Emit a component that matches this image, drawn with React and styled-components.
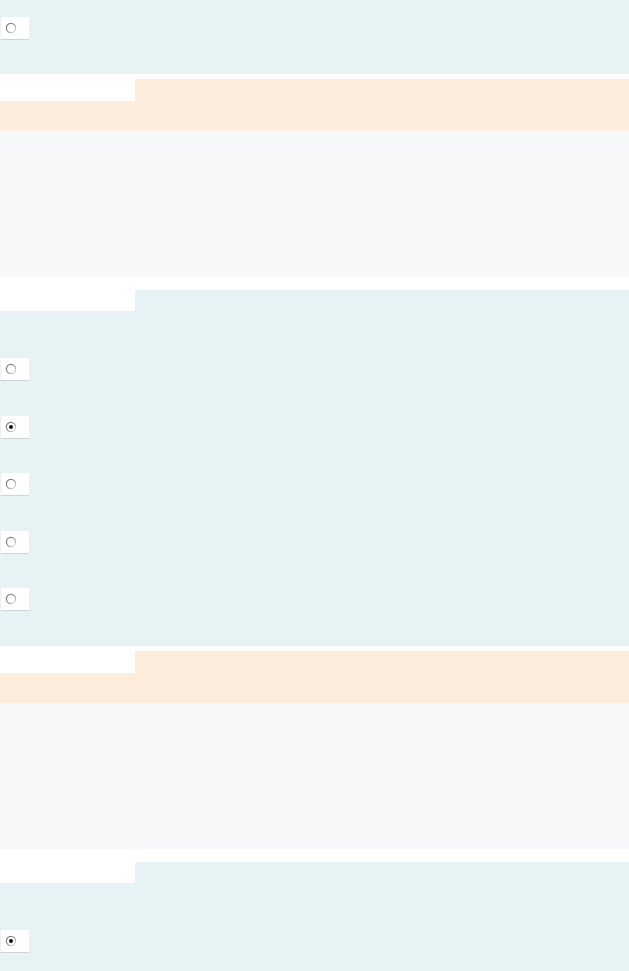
import React from 'react';
import styled, { createGlobalStyle } from 'styled-components';

const tones = {
    blue: '#e6f2f4',
    orange: '#fcecdb',
    grey: '#f7f8fa',
};

const GlobalStyle = createGlobalStyle`
    html, body {
        margin: 0;
        padding: 0;
        background: #ffffff;
        font-family: "Liberation Sans", Arial, sans-serif;
    }
`;

const Page = styled.div`
    display: flex;
    flex-direction: column;
    width: 100%;
    min-height: 971px;
`;

const Band = styled.div`
    display: flex;
    flex-direction: column;
    gap: 34.5px;
    background: ${(p) => tones[p.$tone]};
    height: ${(p) => (p.$height ? `${p.$height}px` : 'auto')};
    padding: ${(p) => p.$pad || '0'};
    flex: ${(p) => (p.$grow ? 1 : 'none')};
    box-sizing: border-box;
`;

const Header = styled.div`
    display: grid;
    grid-template-columns: 135px 1fr;
    padding-top: ${(p) => p.$gap}px;
    background: #ffffff;

    .fill {
        height: ${(p) => p.$height}px;
        background: ${(p) => tones[p.$tone]};
    }
`;

const RadioBox = styled.label`
    display: flex;
    align-items: center;
    width: 28px;
    height: 23px;
    margin-left: 1px;
    padding-left: 4px;
    box-sizing: border-box;
    background: #ffffff;
    border-bottom: 1px solid #cfd3d4;
`;

const Radio = ({ checked, id }) => (
    <RadioBox>
        <svg width="12" height="12" viewBox="0 0 12 12">
            <defs>
                <linearGradient id={`rg-${id}`} x1="0" y1="0" x2="1" y2="1">
                    <stop offset="0" stopColor="#6f6f6f" />
                    <stop offset="0.55" stopColor="#9a9a9a" />
                    <stop offset="1" stopColor="#f0f0f0" />
                </linearGradient>
            </defs>
            <circle cx="6" cy="6" r="4.6" fill="#fff" stroke={`url(#rg-${id})`} strokeWidth="1.3" />
            {checked && <circle cx="6" cy="6" r="2" fill="#111" />}
        </svg>
    </RadioBox>
);

const TabHeader = ({ tone, gap, height }) => (
    <Header $tone={tone} $gap={gap} $height={height}>
        <div />
        <div className="fill" />
    </Header>
);

const App = () => {
    const options = [false, true, false, false, false];
    return (
        <Page>
            <GlobalStyle />
            <Band $tone="blue" $height={74} $pad="17px 0 0">
                <Radio id="a" />
            </Band>

            <TabHeader tone="orange" gap={5} height={22} />
            <Band $tone="orange" $height={30} />
            <Band $tone="grey" $height={146} />

            <TabHeader tone="blue" gap={13} height={21} />
            <Band $tone="blue" $height={335} $pad="47px 0 0">
                {options.map((c, i) => (
                    <Radio key={i} id={`b${i}`} checked={c} />
                ))}
            </Band>

            <TabHeader tone="orange" gap={5} height={22} />
            <Band $tone="orange" $height={30} />
            <Band $tone="grey" $height={146} />

            <TabHeader tone="blue" gap={13} height={21} />
            <Band $tone="blue" $grow $pad="47px 0 0">
                <Radio id="c" checked />
            </Band>
        </Page>
    );
};

export default App;
